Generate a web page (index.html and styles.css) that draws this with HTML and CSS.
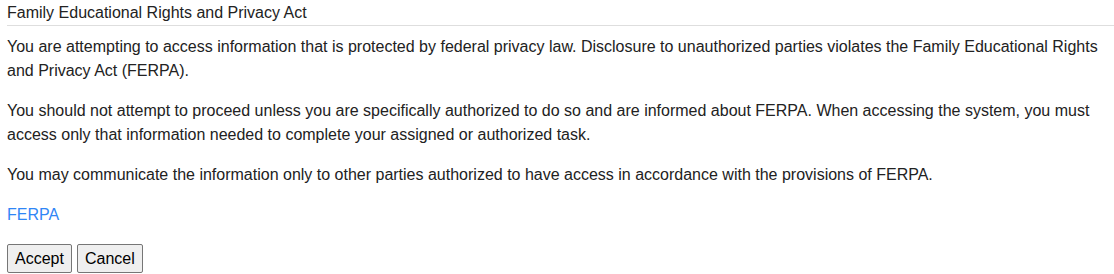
FILE: index.html
```html
<!DOCTYPE html>
<html>
<head>
<meta charset="utf-8">
<link rel="stylesheet" href="styles.css">
</head>
<body>
<div class="notice">
  <div class="notice-title">Family Educational Rights and Privacy Act</div>
  <div class="notice-body">
    <p>You are attempting to access information that is protected by federal privacy law. Disclosure to unauthorized parties violates the Family Educational Rights and Privacy Act (FERPA).</p>
    <p>You should not attempt to proceed unless you are specifically authorized to do so and are informed about FERPA. When accessing the system, you must access only that information needed to complete your assigned or authorized task.</p>
    <p>You may communicate the information only to other parties authorized to have access in accordance with the provisions of FERPA.</p>
    <p><a class="link" href="#">FERPA</a></p>
    <div class="actions">
      <button class="btn" type="button">Accept</button>
      <button class="btn" type="button">Cancel</button>
    </div>
  </div>
</div>
</body>
</html>
```

FILE: styles.css
```css
html, body {
  margin: 0;
  padding: 0;
  background: #fff;
}
body {
  font-family: "Liberation Sans", Arial, sans-serif;
  font-size: 16px;
  color: #222;
}
.notice {
  padding-left: 7px;
}
.notice-title {
  padding-top: 1px;
  line-height: 24px;
  border-bottom: 1px solid #dedede;
}
.notice-body {
  padding-top: 9px;
  padding-right: 14px;
}
.notice-body p {
  margin: 0 0 16px 0;
  line-height: 24px;
}
.link {
  color: #2f86f6;
  text-decoration: none;
}
.actions {
  display: flex;
  gap: 5px;
  padding-top: 1px;
}
.btn {
  font-family: "Liberation Sans", Arial, sans-serif;
  font-size: 16px;
  color: #000;
  background: #efefef;
  border: 1px solid #767676;
  border-radius: 2px;
  padding: 5px 7px;
  line-height: 17px;
}
```
